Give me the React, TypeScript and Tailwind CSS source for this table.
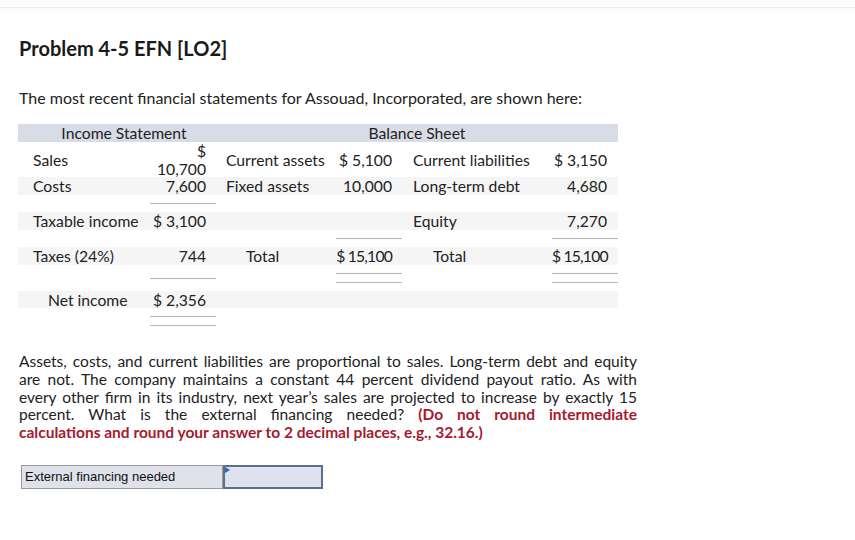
const font = { fontFamily: "Lato, 'Open Sans', sans-serif" };

const cols = "grid grid-cols-[132px_66px_120px_66px_150px_66px] whitespace-nowrap";

function Line({ double }: { double?: boolean }) {
  return (
    <div className="flex flex-col gap-[8px]">
      <div className="h-px bg-[#b5b5b5]" />
      {double && <div className="h-px bg-[#b5b5b5]" />}
    </div>
  );
}

export default function App() {
  return (
    <main className="min-h-[540px] w-[855px] bg-white text-[#222]" style={font}>
      <div className="h-[8px] border-b border-[#ececec] bg-[#fbfbfb]" />
      <div className="h-[6px] bg-gradient-to-b from-[#fafafa] to-white" />

      <div className="pl-[19px]">
        <h1 className="mt-[21px] text-[20px] font-bold leading-[26px] text-[#1a1a1a]">
          Problem 4-5 EFN [LO2]
        </h1>

        <p className="mt-[27px] text-[16px] leading-[20px]">
          The most recent financial statements for Assouad, Incorporated, are shown here:
        </p>
      </div>

      <div className="ml-[18px] mt-[16px] w-[600px] text-[15.7px] leading-[18px]">
        <div className={`${cols} h-[18px] bg-[#d8dce6]`}>
          <div className="col-span-2 pl-[14px] text-center">Income Statement</div>
          <div className="col-span-4 text-center">Balance Sheet</div>
        </div>

        <div className={`${cols} h-[35px] items-center`}>
          <div className="pl-[15px]">Sales</div>
          <div className="pr-[10px] text-right">
            <div>$</div>
            <div>10,700</div>
          </div>
          <div className="pl-[10px]">Current assets</div>
          <div className="pr-[10px] text-right">$ 5,100</div>
          <div className="pl-[11px]">Current liabilities</div>
          <div className="pr-[11px] text-right">$ 3,150</div>
        </div>

        <div className={`${cols} h-[18px] items-center bg-[#f5f5f5]`}>
          <div className="pl-[15px]">Costs</div>
          <div className="pr-[10px] text-right">7,600</div>
          <div className="pl-[10px]">Fixed assets</div>
          <div className="pr-[10px] text-right">10,000</div>
          <div className="pl-[11px]">Long-term debt</div>
          <div className="pr-[11px] text-right">4,680</div>
        </div>

        <div className={`${cols} h-[17px] items-center`}>
          <div />
          <Line />
        </div>

        <div className={`${cols} h-[18px] items-center bg-[#f5f5f5]`}>
          <div className="pl-[15px]">Taxable income</div>
          <div className="pr-[10px] text-right">$ 3,100</div>
          <div />
          <div />
          <div className="pl-[11px]">Equity</div>
          <div className="pr-[11px] text-right">7,270</div>
        </div>

        <div className={`${cols} h-[17px] items-center`}>
          <div />
          <div />
          <div />
          <Line />
          <div />
          <Line />
        </div>

        <div className={`${cols} h-[18px] items-center bg-[#f5f5f5]`}>
          <div className="pl-[15px]">Taxes (24%)</div>
          <div className="pr-[10px] text-right">744</div>
          <div className="pl-[30px]">Total</div>
          <div className="pr-[10px] text-right tracking-[-0.8px]">$ 15,100</div>
          <div className="pl-[31px]">Total</div>
          <div className="pr-[11px] text-right tracking-[-0.8px]">$ 15,100</div>
        </div>

        <div className={`${cols} h-[26px] items-center`}>
          <div />
          <Line />
          <div />
          <Line double />
          <div />
          <Line double />
        </div>

        <div className={`${cols} h-[17px] items-center bg-[#f5f5f5]`}>
          <div className="pl-[30px]">Net income</div>
          <div className="pr-[10px] text-right">$ 2,356</div>
        </div>

        <div className={`${cols} h-[26px] items-center`}>
          <div />
          <Line double />
        </div>
      </div>

      <div className="ml-[19px] mt-[19px] w-[618px] text-[15.5px] leading-[17.8px]">
        <div className="text-justify [text-align-last:justify]">
          Assets, costs, and current liabilities are proportional to sales. Long-term debt and equity
        </div>
        <div className="text-justify [text-align-last:justify]">
          are not. The company maintains a constant 44 percent dividend payout ratio. As with
        </div>
        <div className="text-justify [text-align-last:justify]">
          every other firm in its industry, next year’s sales are projected to increase by exactly 15
        </div>
        <div className="text-justify [text-align-last:justify]">
          percent. What is the external financing needed?{" "}
          <b className="text-[#a6192e]">(Do not round intermediate</b>
        </div>
        <div className="font-bold text-[#a6192e]">
          calculations and round your answer to 2 decimal places, e.g., 32.16.)
        </div>
      </div>

      <div
        className="ml-[21px] mt-[23px] flex h-[24px] w-[302px]"
        style={{ fontFamily: "'Liberation Sans', Arial, sans-serif" }}
      >
        <div className="flex w-[202px] items-center border border-[#9a9a9a] bg-[#dfe2ea] pl-[3px] text-[13px] text-[#111]">
          External financing needed
        </div>
        <div className="relative w-[100px] border-2 border-[#5d6f8c] bg-[#dde2ee]">
          <div className="absolute left-0 top-0 h-0 w-0 border-y-[3px] border-l-[5px] border-y-transparent border-l-[#2f67c0]" />
        </div>
      </div>
    </main>
  );
}
